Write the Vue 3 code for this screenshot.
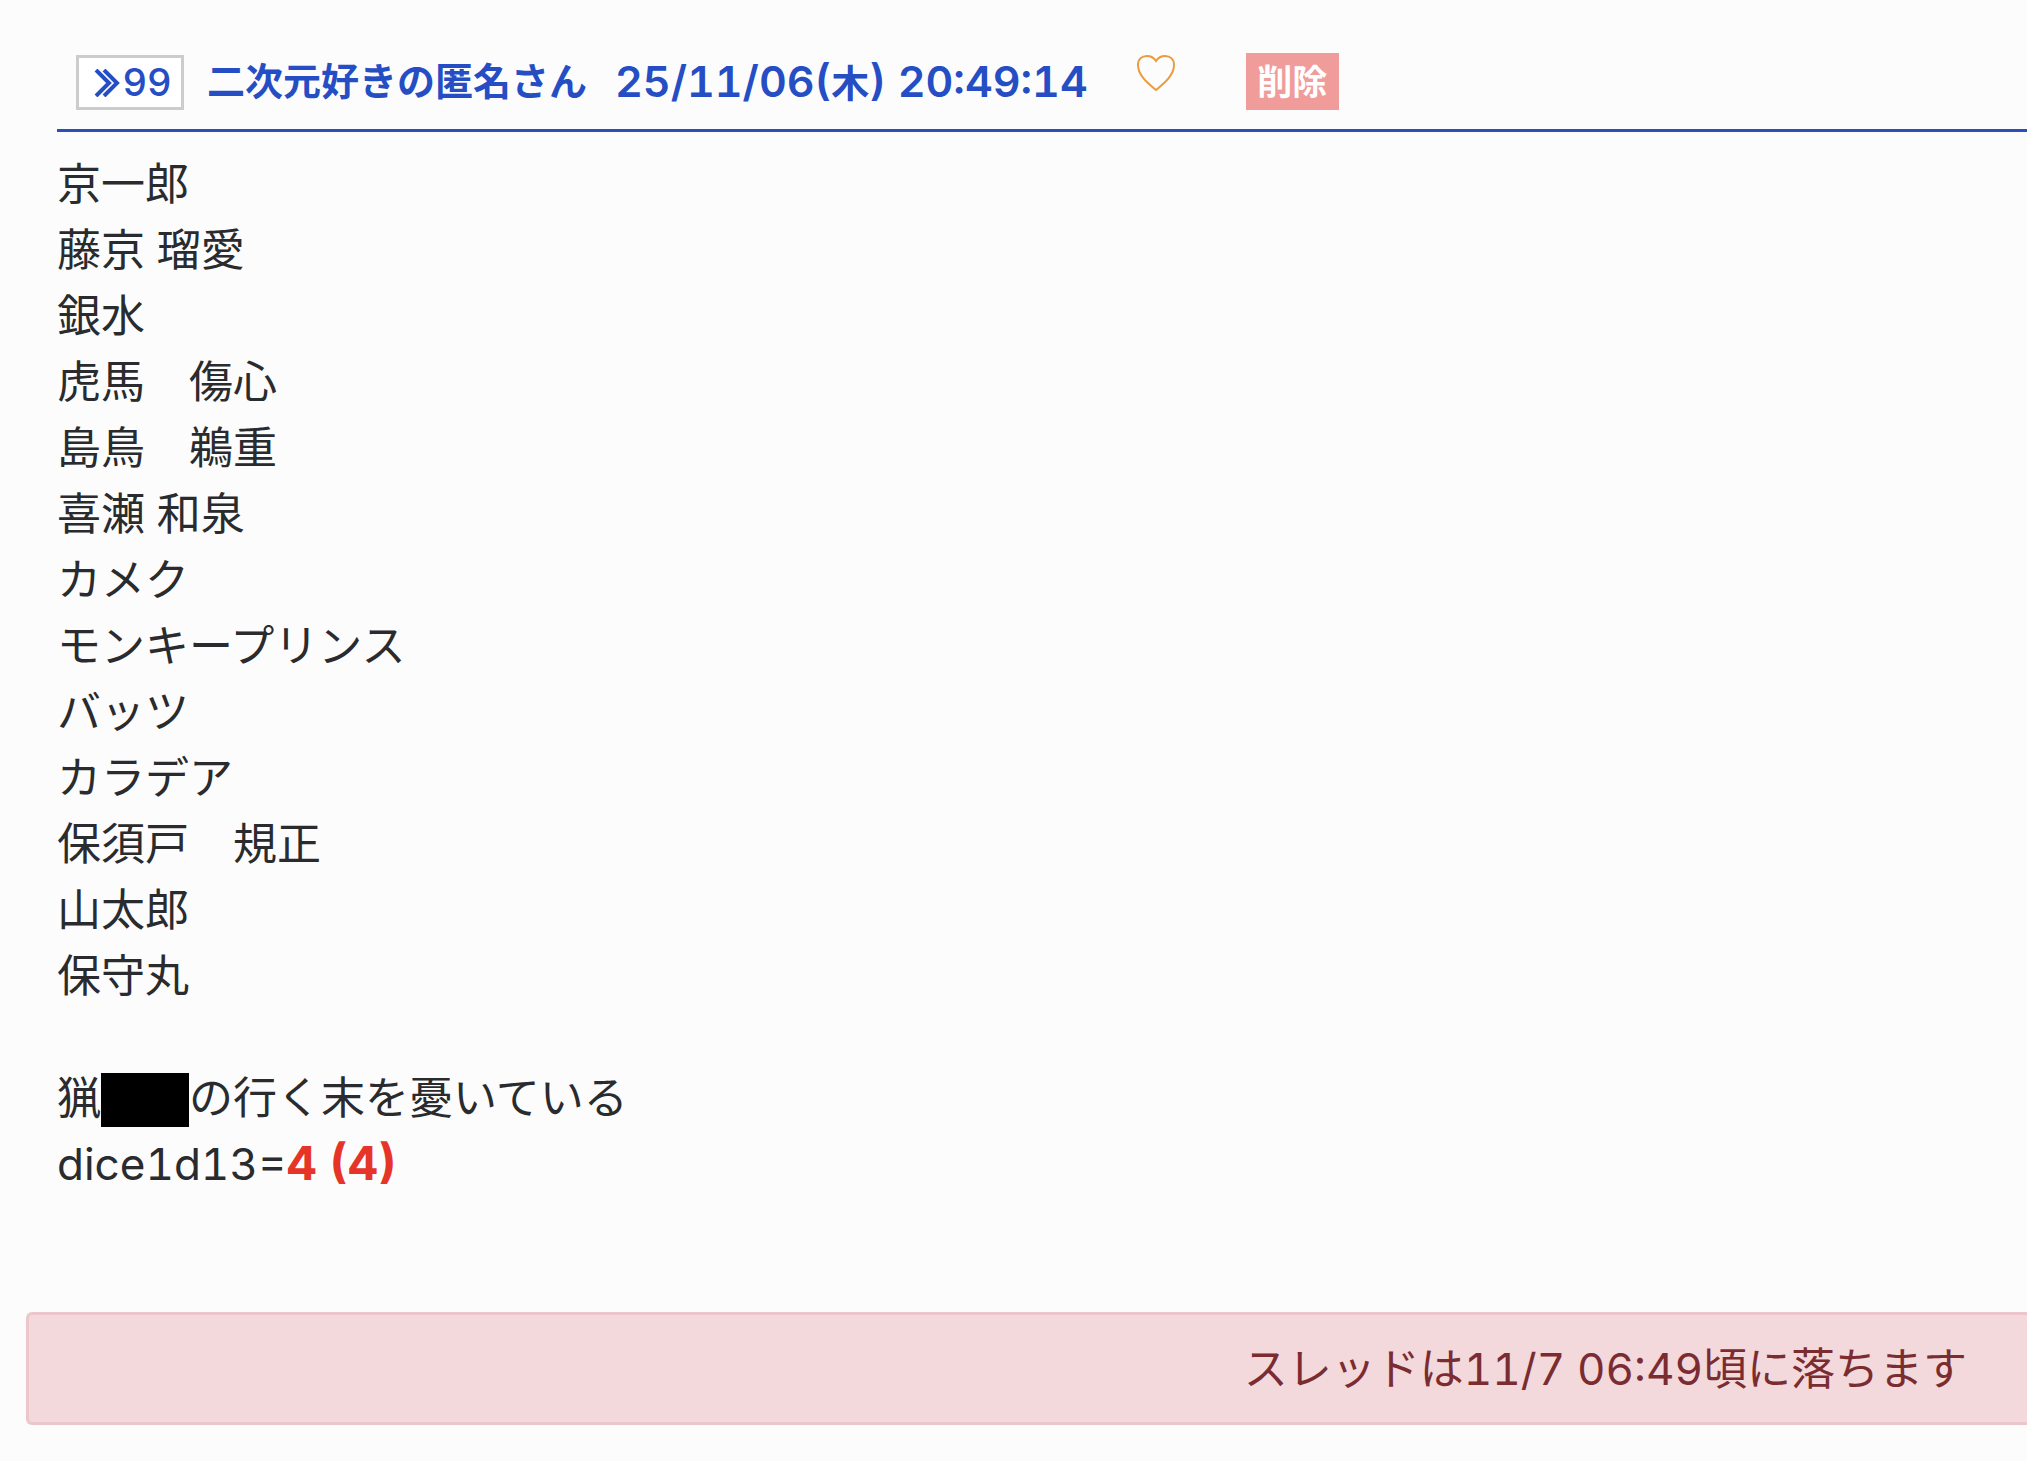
<script setup>
const names = [
  '京一郎',
  '藤京 瑠愛',
  '銀水',
  '虎馬　傷心',
  '島鳥　鵜重',
  '喜瀬 和泉',
  'カメク',
  'モンキープリンス',
  'バッツ',
  'カラデア',
  '保須戸　規正',
  '山太郎',
  '保守丸',
]
</script>

<template>
  <main class="thread">
    <article class="post">
      <header class="post-head">
        <button class="reply" type="button" aria-label="99に返信">
          <svg class="chevrons" viewBox="0 0 26 28" aria-hidden="true">
            <path d="M2 1 L15 14 L2 27 M10 1 L23 14 L10 27" />
          </svg>
          <span>99</span>
        </button>
        <span class="author">二次元好きの匿名さん</span>
        <time class="date" datetime="2025-11-06T20:49:14">25/11/06(<span class="day">木</span>) 20:49:14</time>
        <button class="like" type="button" aria-label="いいね">
          <svg viewBox="0 0 40 38" aria-hidden="true">
            <path d="M20 36 C13 30 2 22 2 11 C2 5 6 2 11 2 C15 2 18 4 20 7 C22 4 25 2 29 2 C34 2 38 5 38 11 C38 22 27 30 20 36 Z" />
          </svg>
        </button>
        <button class="delete" type="button">削除</button>
      </header>
      <div class="body">
        <p v-for="name in names" :key="name">{{ name }}</p>
        <p class="verse">猟<span class="redacted"></span>の行く末を憂いている</p>
        <p>dice1d13=<strong>4 (4)</strong></p>
      </div>
    </article>
    <p class="notice" role="status">スレッドは11/7 06:49頃に落ちます</p>
  </main>
</template>

<style>
body {
  margin: 0;
  background: #fcfcfc;
}
</style>

<style scoped>
.thread {
  overflow: hidden;
  padding-top: 53px;
  font-family: Inter, "Noto Sans CJK JP", sans-serif;
  font-size: 44px;
  font-variant-numeric: tabular-nums;
  line-height: 66px;
  color: #292b2e;
}
p {
  margin: 0;
}
button {
  margin: 0;
  padding: 0;
  border: 0;
  background: none;
  font: inherit;
  cursor: pointer;
}
.post {
  margin-left: 57px;
}
.post-head {
  display: flex;
  align-items: flex-start;
  height: 76px;
  padding-left: 19px;
  border-bottom: 3px solid #2a50b8;
  line-height: 56px;
  color: #254ec4;
  white-space: nowrap;
}
.reply {
  display: flex;
  align-items: center;
  justify-content: center;
  gap: 2px;
  box-sizing: border-box;
  width: 108px;
  height: 55px;
  margin-top: 2px;
  padding-left: 6px;
  border: 3px solid #ccc;
  background: #fff;
  color: #254ec4;
  font-size: 38px;
  font-weight: 500;
  line-height: 48px;
}
.chevrons {
  width: 26px;
  height: 28px;
  fill: none;
  stroke: currentColor;
  stroke-width: 4;
}
.reply span {
  padding-bottom: 2px;
}
.author {
  margin-left: 23px;
  font-size: 38px;
  font-weight: 700;
}
.date {
  margin-left: 28px;
  font-size: 43px;
  font-weight: 600;
}
.day {
  font-size: 38px;
}
.like {
  width: 40px;
  height: 38px;
  margin: 1px 0 0 48px;
}
.like svg {
  display: block;
  width: 40px;
  height: 38px;
  fill: none;
  stroke: #eb9a3c;
  stroke-width: 2;
}
.delete {
  width: 93px;
  height: 57px;
  margin-left: 70px;
  background: #f09c9a;
  color: #fff;
  font-size: 35px;
  font-weight: 700;
  line-height: 56px;
}
.body {
  padding-top: 19px;
}
.verse {
  margin-top: 56px;
}
.redacted {
  display: inline-block;
  width: 88px;
  height: 54px;
  background: #000;
  vertical-align: -13px;
}
strong {
  color: #e63528;
  font-size: 47px;
  font-weight: 700;
  line-height: 44px;
}
.notice {
  margin: 115px 0 0 26px;
  padding: 21px 60px 20px 0;
  border: 3px solid #edc6cb;
  border-right: 0;
  border-radius: 6px 0 0 6px;
  background: #f3d8dc;
  color: #7a2c31;
  text-align: right;
}
</style>
